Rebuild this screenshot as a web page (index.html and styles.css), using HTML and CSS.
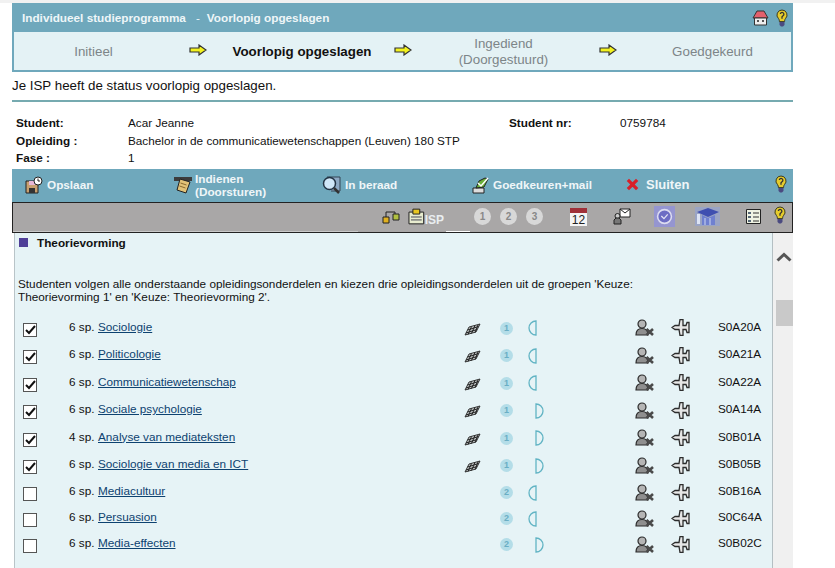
FILE: index.html
```html
<!DOCTYPE html>
<html lang="nl">
<head>
  <meta charset="UTF-8" />
  <title>Individueel studieprogramma</title>
  <link rel="stylesheet" href="styles.css">
</head>
<body>
  <svg class="defs" width="0" height="0">
    <defs>
      <symbol id="arrow" viewBox="0 0 18 12">
        <path d="M1 4h9V1l7 5-7 5V8H1z" fill="#f2f21e" stroke="#333" stroke-width="1.200"/>
      </symbol>
      <symbol id="bulb" viewBox="0 0 12 18">
        <path d="M6 1a5 5 0 0 0-3.500 8.600c.8 1 .9 2 .9 3h5.200c0-1 .1-2 .9-3A5 5 0 0 0 6 1z" fill="#e6cc2c" stroke="#3a3a20"/>
        <path d="M4.300 5a1.800 1.800 0 1 1 2.700 1.800l-1 .9v2" fill="none" stroke="#333" stroke-width="1.300"/>
        <path d="M3.500 13h5v3l-1.500 1.500h-2L3.500 16z" fill="#4a4a80"/>
      </symbol>
      <symbol id="eye" viewBox="0 0 17 13">
        <path d="M1 12 5 4l11-3-4 8z" fill="#c4c8c8" stroke="#222" stroke-width=".900"/>
        <path d="M3.500 7 14.500 3.500M2 10 13 6.500M7.500 3.500l-3.500 8M11 2.500l-3.500 8M14 2l-3 7.500" stroke="#222" stroke-width="1" fill="none"/>
      </symbol>
      <symbol id="person" viewBox="0 0 19 17">
        <circle cx="7" cy="5" r="4" fill="#b5b5b5" stroke="#2a2a2a" stroke-width="1.200"/>
        <path d="M1 16c0-5 2-6.500 6-6.500s6 1.500 6 6.500z" fill="#8f8f8f" stroke="#2a2a2a" stroke-width="1.200"/>
        <path d="M11.500 10l6.500 6M18 10l-6.500 6" stroke="#4a4a4a" stroke-width="2.600"/>
      </symbol>
      <symbol id="plane" viewBox="0 0 19 17">
        <path d="M1 8.500 4 6.500h4l1-6h3v6h3l1-3h2v10h-2l-1-3h-3v6H9l-1-6H4z" fill="#e6e6e6" stroke="#2c2c2c" stroke-width="1.300"/>
      </symbol>
    </defs>
  </svg>

  <div class="page">
    <header class="isp-head">
      <div class="head-title">
        <span>Individueel studieprogramma</span>
        <span class="dash">-</span>
        <span>Voorlopig opgeslagen</span>
        <span class="head-icons">
          <svg width="17" height="16" viewBox="0 0 17 16"><path d="M5 1h7l4 7H1z" fill="#e2606c" stroke="#333"/><path d="M2.500 8h12v7h-12z" fill="#eee" stroke="#333"/><path d="M5 10h2v2H5zM10 10h2v2h-2z" fill="#555"/></svg>
          <svg width="12" height="18"><use href="#bulb"/></svg>
        </span>
      </div>
      <div class="steps">
        <div class="step step-1">Initieel</div>
        <svg class="step-arrow first" width="18" height="12"><use href="#arrow"/></svg>
        <div class="step step-2 current">Voorlopig opgeslagen</div>
        <svg class="step-arrow" width="18" height="12"><use href="#arrow"/></svg>
        <div class="step step-3">Ingediend<br>(Doorgestuurd)</div>
        <svg class="step-arrow" width="18" height="12"><use href="#arrow"/></svg>
        <div class="step step-4">Goedgekeurd</div>
      </div>
    </header>

    <p class="status-line">Je ISP heeft de status voorlopig opgeslagen.</p>

    <section class="student">
      <div class="row"><b>Student:</b><span class="val">Acar Jeanne</span><b class="nr-label">Student nr:</b><span>0759784</span></div>
      <div class="row"><b>Opleiding :</b><span class="val">Bachelor in de communicatiewetenschappen (Leuven) 180 STP</span></div>
      <div class="row"><b>Fase :</b><span class="val">1</span></div>
    </section>

    <nav class="actions">
      <a class="act act-save">
        <svg width="18" height="18" viewBox="0 0 18 18"><path d="M1 5h12v12H1z" fill="#c8a070" stroke="#222"/><path d="M4 5h6v4H4z" fill="#e7b7d7"/><path d="M4 12h6v5H4z" fill="#333"/><circle cx="13" cy="5" r="4" fill="#fff" stroke="#222"/><path d="M13 2.500V5h2" fill="none" stroke="#222"/></svg>
        Opslaan
      </a>
      <a class="act act-send">
        <svg width="18" height="18" viewBox="0 0 18 18"><path d="M0 1h18v4H0z" fill="#3c3c3c"/><path d="M6 3l10 3-4 11-9-3z" fill="#e2c277" stroke="#222"/><path d="M6.500 7l6 2M5.500 10l6 2" stroke="#8a6a30"/></svg>
        <span>Indienen<br>(Doorsturen)</span>
      </a>
      <a class="act act-wait">
        <svg width="19" height="18" viewBox="0 0 19 18"><path d="M5 1h13v14H9" fill="#8da9c4" stroke="#345"/><circle cx="7.500" cy="7.500" r="6" fill="#cfe6f7" stroke="#234" stroke-width="1.500"/><path d="M12 12l5 5" stroke="#333" stroke-width="2.500"/></svg>
        In beraad
      </a>
      <a class="act act-mail">
        <svg width="19" height="18" viewBox="0 0 19 18"><path d="M2 12h11v5H2z" fill="#ddd" stroke="#222"/><path d="M5 12 8 5l6-3 3 1-4 8z" fill="#6bb03a" stroke="#222"/><path d="M7 7l3 3 7-8" fill="none" stroke="#fff" stroke-width="1.500"/></svg>
        Goedkeuren+mail
      </a>
      <a class="act act-close">
        <svg width="13" height="13" viewBox="0 0 14 14"><path d="M2 2l10 10M12 2 2 12" stroke="#d8202a" stroke-width="3.500"/></svg>
        <b>Sluiten</b>
      </a>
      <svg class="act-bulb" width="12" height="18"><use href="#bulb"/></svg>
    </nav>

    <div class="tools">
      <svg class="t t-tree" width="19" height="16" viewBox="0 0 19 16"><path d="M4 9V4h9v3" fill="none" stroke="#222"/><path d="M1 9h6v6H1z" fill="#e0b020" stroke="#222"/><path d="M11 6h6v6h-6z" fill="#b0c040" stroke="#222"/></svg>
      <span class="t-isp">
        <svg width="17" height="17" viewBox="0 0 17 17"><path d="M1 4h15v12H1z" fill="#e8eccf" stroke="#222"/><path d="M5 1h7v5H5z" fill="#e8c620" stroke="#222"/><path d="M3 9h11M3 12h11" stroke="#445"/></svg>
        <b>ISP</b>
      </span>
      <span class="nums">
        <i>1</i><i>2</i><i>3</i>
      </span>
      <svg class="t t-cal" width="17" height="19" viewBox="0 0 17 19"><path d="M0 1h17v18H0z" fill="#f4f4f4"/><path d="M0 1h17v5H0z" fill="#a03038"/><text x="8.500" y="17" font-size="12" text-anchor="middle" font-family="Liberation Sans" fill="#222">12</text></svg>
      <svg class="t t-msg" width="18" height="17" viewBox="0 0 18 17"><path d="M7 1h10v8H7z" fill="#fff" stroke="#222"/><path d="M7 1l5 4 5-4" fill="none" stroke="#222"/><circle cx="4.500" cy="8" r="2.500" fill="#ccc" stroke="#222"/><path d="M1 16v-4l2-2h3l2 2v4z" fill="#777" stroke="#222"/></svg>
      <span class="t t-clock"><svg width="17" height="17" viewBox="0 0 16 16"><circle cx="8" cy="8" r="6.500" fill="#6d6dc4" stroke="#dcdcf0" stroke-width="1.500"/><path d="M5 7.500 7.500 10 11 6" stroke="#e4e4f4" stroke-width="1.200" fill="none"/></svg></span>
      <svg class="t t-cap" width="25" height="19" viewBox="0 0 25 19"><path d="M0 0h25v19H0z" fill="#9aa4c4"/><path d="M2 5 13 1l11 4-11 5z" fill="#3f4fb0"/><path d="M7 8v10h13V8l-7 3z" fill="#6f80d0"/><path d="M2 7v10h3V7z" fill="#dde4f4"/><path d="M10 11v7M15 11v7" stroke="#cfd8f0"/></svg>
      <svg class="t t-list" width="15" height="15" viewBox="0 0 15 15"><path d="M.5.500h14v14H.5z" fill="#f0f4e4" stroke="#222"/><path d="M2 3h3v2H2zM2 7h3v2H2zM2 11h3v2H2z" fill="#567"/><path d="M7 4h6M7 8h6M7 12h6" stroke="#333"/></svg>
      <svg class="t-bulb" width="12" height="18"><use href="#bulb"/></svg>
    </div>

    <div class="content-wrap">
      <main class="content">
        <h2 class="group"><span class="sq"></span>Theorievorming</h2>
        <p class="intro">Studenten volgen alle onderstaande opleidingsonderdelen en kiezen drie opleidingsonderdelen uit de groepen 'Keuze: Theorievorming 1' en 'Keuze: Theorievorming 2'.</p>
        <div class="courses" id="courses"></div>
      </main>
      <div class="scrollbar">
        <svg class="up" width="16" height="10" viewBox="0 0 16 10"><path d="M1.500 8.500 8 2.500l6.500 6" fill="none" stroke="#555" stroke-width="3"/></svg>
        <div class="thumb"></div>
      </div>
    </div>
  </div>

  <script>
    const courses = [
      [1, 6, "Sociologie", 1, "l", "S0A20A", 27],
      [1, 6, "Politicologie", 1, "l", "S0A21A", 28],
      [1, 6, "Communicatiewetenschap", 1, "l", "S0A22A", 27],
      [1, 6, "Sociale psychologie", 1, "r", "S0A14A", 28],
      [1, 4, "Analyse van mediateksten", 1, "r", "S0B01A", 27],
      [1, 6, "Sociologie van media en ICT", 1, "r", "S0B05B", 28],
      [0, 6, "Mediacultuur", 2, "l", "S0B16A", 26],
      [0, 6, "Persuasion", 2, "l", "S0C64A", 26],
      [0, 6, "Media-effecten", 2, "r", "S0B02C", 26]
    ];
    const list = document.getElementById("courses");
    courses.forEach(c => {
      const row = document.createElement("div");
      row.className = "course";
      row.style.height = c[6] + "px";
      const half = c[4] === "l"
        ? '<path d="M8 1v14A7 7 0 0 1 8 1z"/>'
        : '<path d="M1 1v14A7 7 0 0 0 1 1z"/>';
      row.innerHTML =
        '<span class="box' + (c[0] ? ' on' : '') + '">' + (c[0] ? '<svg width="11" height="10" viewBox="0 0 11 10"><path d="M1 5l3 3 6-7" fill="none" stroke="#111" stroke-width="2"/></svg>' : '') + '</span>' +
        '<span class="sp">' + c[1] + ' sp.</span>' +
        '<a class="name">' + c[2] + '</a>' +
        '<span class="eye">' + (c[3] === 1 ? '<svg width="17" height="13"><use href="#eye"/></svg>' : '') + '</span>' +
        '<span class="fase">' + c[3] + '</span>' +
        '<span class="sem ' + c[4] + '"><svg width="9" height="16" viewBox="0 0 9 16" fill="none" stroke="#62b4c4" stroke-width="1.300">' + half + '</svg></span>' +
        '<svg class="person" width="19" height="17"><use href="#person"/></svg>' +
        '<svg class="plane" width="19" height="17"><use href="#plane"/></svg>' +
        '<span class="code">' + c[5] + '</span>';
      list.appendChild(row);
    });
  </script>
</body>
</html>
```

FILE: styles.css
```css
body {
  margin: 0;
  background: #fff;
  border-top: 3px solid #f1f1f1;
  font-family: "Liberation Sans", Arial, sans-serif;
  font-size: 11.75px;
  color: #111;
  height: 565px;
  overflow: hidden;
}
.defs { position: absolute; }
.page {
  width: 781px;
  margin-left: 12px;
}

/* header block */
.isp-head {
  background: #e4f2f5;
  border: 2px solid #6fa8bc;
  border-top: 0;
  height: 69px;
  box-sizing: border-box;
}
.head-title {
  background: #6fa8bc;
  margin: 0 -2px;
  height: 29px;
  display: flex;
  align-items: center;
  padding-left: 10px;
  color: #eef6f8;
  font-weight: bold;
}
.dash { margin: 0 7px 0 10px; font-weight: normal; }
.head-icons {
  margin-left: auto;
  margin-right: 5px;
  display: flex;
  align-items: center;
  gap: 7px;
}
.steps {
  display: flex;
  align-items: center;
  height: 38px;
  font-size: 13.33px;
  color: #7d8588;
}
.step { text-align: center; line-height: 16px; box-sizing: border-box; flex: none; padding-top: 2px; }
.step-1 { width: 159px; }
.step-2 { width: 187px; padding-left: 3px; color: #111; font-weight: bold; }
.step-3 { width: 187px; padding-right: 4px; }
.step-4 { width: 174px; padding-left: 17px; }
.step-arrow { flex: none; margin-bottom: 2px; }
.step-arrow.first { margin-left: 16px; }

.status-line {
  margin: 0;
  height: 28px;
  border-bottom: 2px solid #76aab0;
  font-size: 13.33px;
  line-height: 27px;
}

/* student info */
.student { padding: 12px 0 0 4px; height: 55px; }
.student .row { display: flex; height: 17.5px; line-height: 17px; }
.student b { width: 112px; flex: none; }
.student .val { width: 381px; }
.student b.nr-label { width: 111px; }

/* action bar */
.actions {
  background: #6fa8bc;
  height: 33px;
  box-sizing: border-box;
  padding-bottom: 2px;
  color: #f0f6f8;
  font-weight: bold;
  display: flex;
  align-items: center;
}
.act { display: flex; align-items: center; gap: 4px; line-height: 13px; flex: none; box-sizing: border-box; }
.act-save { width: 162px; padding-left: 13px; }
.act-send { width: 148px; gap: 3px; }
.act-wait { width: 149px; }
.act-mail { width: 155px; gap: 3px; }
.act-close { width: 149px; font-size: 13px; gap: 7px; }
.act-bulb { flex: none; margin-bottom: 1px; }

/* tool bar */
.tools {
  background: #a9a7a7;
  height: 31px;
  border: 1px solid #222;
  box-sizing: border-box;
  padding-bottom: 3px;
  display: flex;
  align-items: center;
  position: relative;
}
.tools::before {
  content: "";
  position: absolute;
  left: 0;
  bottom: 0;
  width: 345px;
  height: 1px;
  background: #c9c9c9;
}
.tools::after {
  content: "";
  position: absolute;
  left: 433px;
  bottom: 0;
  width: 24px;
  height: 1px;
  background: #fff;
}
.t { flex: none; }
.t-tree { margin-left: 369px; }
.t-isp { display: flex; align-items: center; margin-left: 7px; width: 36px; flex: none; }
.t-isp b { margin-top: 8px; color: #e9eef0; font-size: 12px; }
.nums { display: flex; gap: 9px; margin-left: 30px; flex: none; }
.nums i {
  width: 17px;
  height: 17px;
  border-radius: 50%;
  background: #d8d8d8;
  color: #888;
  font-style: normal;
  font-weight: bold;
  font-size: 10px;
  line-height: 17px;
  text-align: center;
}
.t-cal { margin-left: 27px; }
.t-msg { margin-left: 26px; }
.t-clock {
  margin-left: 23px;
  width: 21px;
  height: 21px;
  background: #9595d0;
  display: flex;
  align-items: center;
  justify-content: center;
}
.t-cap { margin-left: 20px; }
.t-list { margin-left: 26px; }
.t-bulb { margin-left: 13px; margin-bottom: 2px; flex: none; }

/* course list */
.content-wrap { display: flex; height: 340px; margin-left: 2px; }
.content {
  width: 759px;
  flex: none;
  background: #e6f3f6;
  border-left: 1px solid #b9c4c8;
  border-right: 1px solid #b4bfc3;
  padding-left: 5px;
  box-sizing: border-box;
}
.group {
  margin: 0;
  font-size: 11.75px;
  height: 18px;
  display: flex;
  align-items: center;
}
.sq {
  width: 9px;
  height: 9px;
  background: #4f3f98;
  margin-right: 9px;
  margin-left: -1px;
}
.intro {
  margin: 26px 0 0 -2px;
  width: 640px;
  line-height: 13px;
  height: 37px;
}
.course {
  display: flex;
  align-items: center;
}
.box {
  width: 14px;
  height: 14px;
  box-sizing: border-box;
  flex: none;
  background: #fff;
  border: 1px solid #555;
  margin: 4px 0 0 3px;
  display: flex;
  align-items: center;
  justify-content: center;
}
.sp { width: 29px; margin-left: 32px; flex: none; margin-top: -3px; }
.name {
  width: 366px;
  flex: none;
  color: #0d4270;
  text-decoration: underline;
  margin-top: -3px;
}
.eye { width: 36px; height: 13px; margin-top: 3px; flex: none; display: flex; }
.fase {
  width: 13px;
  height: 13px;
  flex: none;
  border-radius: 50%;
  background: #b4dde8;
  color: #6aaec4;
  font-size: 9px;
  font-weight: bold;
  line-height: 13px;
  text-align: center;
  margin-top: 1px;
}
.sem { width: 122px; flex: none; padding-left: 15px; margin-top: 1px; display: flex; box-sizing: border-box; }
.sem.r { padding-left: 22px; }
.person { flex: none; }
.plane { flex: none; margin-left: 17px; }
.code { margin-left: 28px; margin-top: -3px; flex: none; }

.scrollbar {
  width: 20px;
  background: #f0f0f0;
  position: relative;
  flex: none;
}
.up { position: absolute; top: 19px; left: 3px; }
.thumb {
  position: absolute;
  top: 67px;
  left: 3px;
  width: 17px;
  height: 26px;
  background: #c9c9c9;
}
```
